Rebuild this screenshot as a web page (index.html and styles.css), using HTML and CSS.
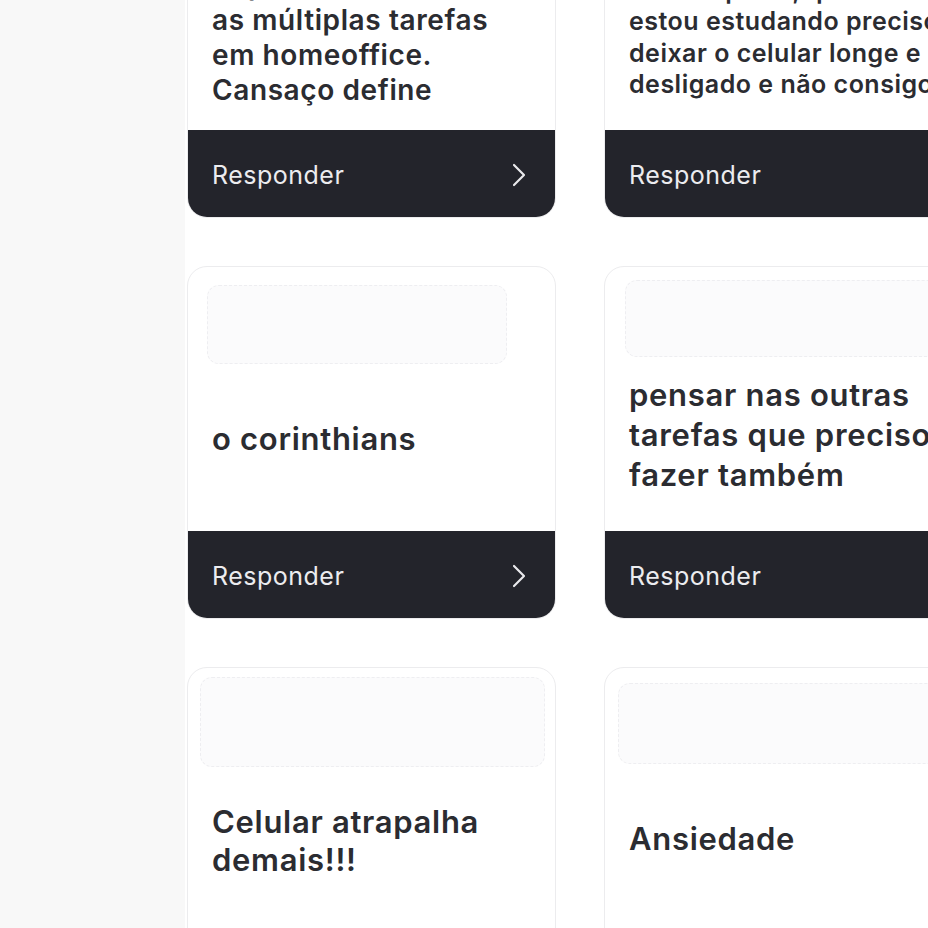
FILE: index.html
```html
<!DOCTYPE html>
<html lang="pt-BR">
<head>
  <meta charset="UTF-8" />
  <title>Respostas</title>
  <link rel="stylesheet" href="styles.css">
</head>
<body>
  <div class="page">
    <div class="sidebar"></div>
    <div class="content">
      <div class="grid">
        <div class="card">
          <div class="thumb"></div>
          <div class="card-body">
            <p class="card-text text-md">Separar<br>as múltiplas tarefas<br>em homeoffice.<br>Cansaço define</p>
          </div>
          <div class="card-footer">
            <span>Responder</span>
            <svg class="chev" width="14" height="24" viewBox="0 0 14 24"><path d="M2 2l10 10-10 10" fill="none" stroke="#e9e9ec" stroke-width="2.2" stroke-linecap="round" stroke-linejoin="round"/></svg>
          </div>
        </div>
        <div class="card">
          <div class="thumb"></div>
          <div class="card-body">
            <p class="card-text text-sm">Celular perto, quando<br>estou estudando preciso<br>deixar o celular longe e<br>desligado e não consigo</p>
          </div>
          <div class="card-footer">
            <span>Responder</span>
            <svg class="chev" width="14" height="24" viewBox="0 0 14 24"><path d="M2 2l10 10-10 10" fill="none" stroke="#e9e9ec" stroke-width="2.2" stroke-linecap="round" stroke-linejoin="round"/></svg>
          </div>
        </div>

        <div class="card">
          <div class="thumb thumb-a"></div>
          <div class="card-body">
            <p class="card-text">o corinthians</p>
          </div>
          <div class="card-footer">
            <span>Responder</span>
            <svg class="chev" width="14" height="24" viewBox="0 0 14 24"><path d="M2 2l10 10-10 10" fill="none" stroke="#e9e9ec" stroke-width="2.2" stroke-linecap="round" stroke-linejoin="round"/></svg>
          </div>
        </div>
        <div class="card">
          <div class="thumb thumb-b"></div>
          <div class="card-body">
            <p class="card-text">pensar nas outras<br>tarefas que preciso<br>fazer também</p>
          </div>
          <div class="card-footer">
            <span>Responder</span>
            <svg class="chev" width="14" height="24" viewBox="0 0 14 24"><path d="M2 2l10 10-10 10" fill="none" stroke="#e9e9ec" stroke-width="2.2" stroke-linecap="round" stroke-linejoin="round"/></svg>
          </div>
        </div>

        <div class="card">
          <div class="thumb thumb-c"></div>
          <div class="card-body">
            <p class="card-text text-lg">Celular atrapalha<br>demais!!!</p>
          </div>
          <div class="card-footer">
            <span>Responder</span>
            <svg class="chev" width="14" height="24" viewBox="0 0 14 24"><path d="M2 2l10 10-10 10" fill="none" stroke="#e9e9ec" stroke-width="2.2" stroke-linecap="round" stroke-linejoin="round"/></svg>
          </div>
        </div>
        <div class="card">
          <div class="thumb thumb-d"></div>
          <div class="card-body">
            <p class="card-text">Ansiedade</p>
          </div>
          <div class="card-footer">
            <span>Responder</span>
            <svg class="chev" width="14" height="24" viewBox="0 0 14 24"><path d="M2 2l10 10-10 10" fill="none" stroke="#e9e9ec" stroke-width="2.2" stroke-linecap="round" stroke-linejoin="round"/></svg>
          </div>
        </div>
      </div>
    </div>
  </div>
</body>
</html>
```

FILE: styles.css
```css
html, body {
  margin: 0;
  padding: 0;
  height: 100%;
  overflow: hidden;
}
body {
  background: #fff;
  color: #2a2b30;
  font-family: Inter, "Noto Sans", "Liberation Sans", sans-serif;
}
.page {
  display: flex;
  width: 928px;
  height: 928px;
  overflow: hidden;
}
.sidebar {
  width: 185px;
  flex: none;
  background: #f8f8f8;
}
.content {
  flex: 1;
  background: #fff;
  padding-left: 2px;
}
.grid {
  display: grid;
  grid-template-columns: 369px 369px;
  column-gap: 48px;
  row-gap: 48px;
  margin-top: -135px;
}
.card {
  height: 353px;
  box-sizing: border-box;
  border: 1.5px solid #ececee;
  border-radius: 20px;
  background: #fff;
  display: flex;
  flex-direction: column;
  overflow: hidden;
}
.thumb {
  height: 77px;
  margin: 18px 48px 0 19px;
  background: #fbfbfc;
  border: 1px dashed #eeeef1;
  border-radius: 12px;
  flex: none;
}
.thumb-b {
  margin: 13px 11px 0 20px;
  height: 75px;
}
.thumb-c {
  margin: 9px 10px 0 12px;
  height: 88px;
}
.thumb-d {
  margin: 15px -20px 0 13px;
  height: 79px;
}
.card-body {
  flex: 1;
  display: flex;
  align-items: center;
  padding: 0 24px 18px 24px;
}
.card-text {
  margin: 0;
  font-size: 31px;
  line-height: 40px;
  font-weight: 600;
  letter-spacing: 0.7px;
  color: #2b2c31;
  white-space: nowrap;
}
.card-text.text-md {
  font-size: 28px;
  line-height: 35px;
  letter-spacing: 0.6px;
}
.card-text.text-sm {
  font-size: 25px;
  line-height: 31.5px;
  letter-spacing: 0.5px;
}
.card-text.text-lg {
  line-height: 38px;
}
.card-footer {
  height: 87px;
  flex: none;
  box-sizing: border-box;
  background: #23242b;
  color: #ececef;
  display: flex;
  align-items: center;
  justify-content: space-between;
  padding: 3px 29px 0 24px;
  font-size: 25px;
  letter-spacing: 0.5px;
}
.chev {
  display: block;
}
```
